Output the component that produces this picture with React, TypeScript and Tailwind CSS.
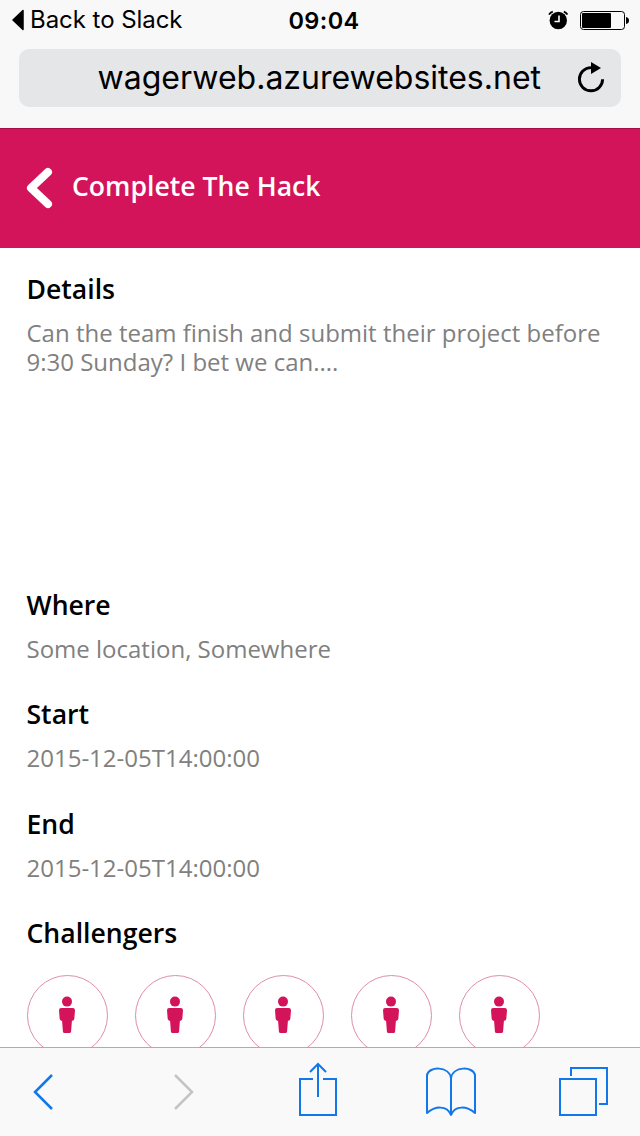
interface SectionProps {
  title: string
  text: string
  className?: string
}

const challengers = [1, 2, 3, 4, 5]

function StatusBar() {
  return (
    <div className="flex h-10 items-center justify-between pl-3 pr-[11px]">
      <div className="flex w-[220px] items-center gap-1.5">
        <svg width="12" height="22" viewBox="0 0 12 22">
          <path d="M11 1.5v19L1 11z" stroke="black" strokeWidth="1.5" strokeLinejoin="round" />
        </svg>
        <span className="whitespace-nowrap text-[24px] leading-10 tracking-[-0.05px]">Back to Slack</span>
      </div>
      <span className="ml-[7px] mt-px text-[23.5px] font-semibold leading-10 tracking-[0.4px]">09:04</span>
      <div className="flex w-[220px] items-center justify-end gap-3">
        <svg width="20" height="20" viewBox="0 0 20 20">
          <circle cx="10.3" cy="10.5" r="8.7" />
          <path d="M1 4.6A6.5 6.5 0 0 1 4.8 1.6M19.4 4.6A6.5 6.5 0 0 0 15.8 1.6" fill="none" stroke="black" strokeWidth="1.8" />
          <path d="M11 5.5v6H6.5" fill="none" stroke="white" strokeWidth="1.6" />
        </svg>
        <svg width="49" height="20" viewBox="0 0 49 20">
          <rect x=".5" y="1.5" width="44" height="18" rx="3" fill="none" stroke="black" />
          <rect x="2" y="3" width="29" height="15" rx="1" />
          <path d="M46 7q3 .5 3 3.5t-3 3.5z" />
        </svg>
      </div>
    </div>
  )
}

function AddressBar() {
  return (
    <div className="mx-[19px] mt-[9px] flex h-[58px] items-center justify-end rounded-[10px] bg-[#e5e6e8] pr-4">
      <span className="mr-9 text-[32px] leading-[58px]">wagerweb.azurewebsites.net</span>
      <svg width="28" height="32" viewBox="0 0 28 32">
        <path d="M14 5.6A11.6 11.6 0 1 0 25.6 17.2" fill="none" stroke="black" strokeWidth="2.9" />
        <path d="M14 0l10 6-10 6z" />
      </svg>
    </div>
  )
}

function Section({ title, text, className = '' }: SectionProps) {
  return (
    <section className={className}>
      <h2 className="text-[26.6px] font-semibold leading-9 text-black">{title}</h2>
      <p className="mt-[11px] text-[24px] leading-[29px] text-[#808080]">{text}</p>
    </section>
  )
}

function Challenger() {
  return (
    <div className="flex size-[81px] shrink-0 items-center justify-center rounded-full border border-[#dc8fab] pb-0.5 pr-px">
      <svg width="16" height="38" viewBox="0 0 16 38" fill="#d4145a">
        <circle cx="8" cy="5.6" r="5" />
        <path d="M2.2 12h11.6q2.2 0 2.2 2.2L15.3 23q-.3 1.7-2.4 2l-.8 10.5q-.1 1.5-1.7 1.5H5.6q-1.6 0-1.7-1.5L3.1 25q-2.1-.3-2.4-2L0 14.2Q0 12 2.2 12z" />
      </svg>
    </div>
  )
}

function Toolbar() {
  return (
    <nav className="h-[89px] shrink-0 border-t border-[#adadad] bg-[#f9f9f9]">
      <svg className="block" width="640" height="88" viewBox="0 1048 640 88" fill="none" stroke="#1278ea" strokeWidth="2">
        <path d="M52 1075L35 1092l17 17" strokeWidth="2.5" />
        <path d="M175 1075l17 17-17 17" stroke="#c4c4c4" strokeWidth="2.5" />
        {/* Share */}
        <path d="M313 1079h-13v36h36v-36h-13M318 1097v-32M310 1072l8-8 8 8" />
        {/* Bookmarks */}
        <path d="M451 1115v-37c-2-12-22-12-24-3v38c8-7 20-8 24 2 4-10 16-9 24-2v-38c-2-9-22-9-24 3" strokeLinejoin="round" />
        {/* Tabs */}
        <path d="M560 1079h36v36h-36zM571 1076v-8h36v36h-8" />
      </svg>
    </nav>
  )
}

export default function App() {
  return (
    <div className="flex h-[1136px] w-[640px] flex-col overflow-hidden bg-white font-['Open_Sans',sans-serif]">
      <header className="h-32 shrink-0 bg-[#f8f8f8] font-['Inter',sans-serif] text-black">
        <StatusBar />
        <AddressBar />
      </header>

      <div className="flex h-[120px] shrink-0 items-center border-t border-[#a50f46] bg-[#d4145a] pl-[26px] text-white">
        <svg className="mb-0.5" width="27" height="42" viewBox="0 0 27 42" fill="none" stroke="white" strokeWidth="8" strokeLinecap="round" strokeLinejoin="round">
          <path d="M22 5L5 21l17 16" />
        </svg>
        <h1 className="mb-1.5 ml-[19px] text-[26.6px] font-semibold leading-9">Complete The Hack</h1>
      </div>

      <main className="min-h-0 flex-1 overflow-hidden pl-[26.5px] pr-6 pt-[23px]">
        <Section
          className="h-[316px]"
          title="Details"
          text="Can the team finish and submit their project before 9:30 Sunday? I bet we can...."
        />
        <Section className="h-[109px]" title="Where" text="Some location, Somewhere" />
        <Section className="h-[109.5px]" title="Start" text="2015-12-05T14:00:00" />
        <Section className="h-[109.5px]" title="End" text="2015-12-05T14:00:00" />
        <h2 className="text-[26.6px] font-semibold leading-9">Challengers</h2>
        <div className="mt-6 flex gap-[27px]">
          {challengers.map((id) => (
            <Challenger key={id} />
          ))}
        </div>
      </main>

      <Toolbar />
    </div>
  )
}
